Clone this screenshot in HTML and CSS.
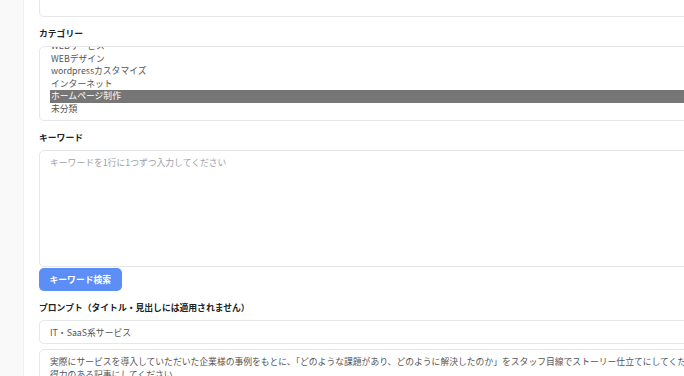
FILE: index.html
```html
<!DOCTYPE html>
<html lang="ja">
<head>
    <meta charset="UTF-8">
    <title>記事生成</title>
    <link rel="stylesheet" href="styles.css">
</head>
<body>
    <div class="layout">
        <aside class="sidebar"></aside>
        <main class="main">
            <form class="form">
                <input type="text" class="field top-field">

                <label class="label">カテゴリー</label>
                <div class="listbox">
                    <ul class="options">
                        <li>WEBサービス</li>
                        <li>WEBデザイン</li>
                        <li>wordpressカスタマイズ</li>
                        <li>インターネット</li>
                        <li class="selected">ホームページ制作</li>
                        <li>未分類</li>
                    </ul>
                </div>

                <label class="label">キーワード</label>
                <textarea class="field keywords" placeholder="キーワードを1行に1つずつ入力してください"></textarea>
                <button type="button" class="btn">キーワード検索</button>

                <label class="label">プロンプト（タイトル・見出しには適用されません）</label>
                <input type="text" class="field" value="IT・SaaS系サービス">
                <textarea class="field prompt">実際にサービスを導入していただいた企業様の事例をもとに、「どのような課題があり、どのように解決したのか」をスタッフ目線でストーリー仕立てにしてください。説得力のある記事にしてください。</textarea>
            </form>
        </main>
    </div>
</body>
</html>
```

FILE: styles.css
```css
body {
    margin: 0;
    padding: 0;
    background: #fff;
    font-family: "Noto Sans CJK JP", "Noto Sans", sans-serif;
    font-size: 8.8px;
    color: #1f2328;
    overflow: hidden;
}
.layout {
    display: flex;
    height: 376px;
}
.sidebar {
    width: 23px;
    flex-shrink: 0;
    background: #f9f9fa;
    border-right: 1px solid #efeff1;
}
.main {
    flex: 1;
    padding-left: 15px;
    overflow: hidden;
}
.form {
    width: 700px;
    display: flex;
    flex-direction: column;
    align-items: flex-start;
    margin-top: -20px;
}
.field {
    box-sizing: border-box;
    width: 100%;
    border: 1px solid #e6e7ea;
    border-radius: 5px;
    font-family: inherit;
    font-size: 8.8px;
    color: #555;
    padding: 0 10px;
    background: #fff;
    outline: none;
}
input.field {
    height: 24px;
}
.top-field {
    height: 37px !important;
}
.label {
    display: block;
    font-weight: bold;
    line-height: 12px;
    height: 12px;
    margin: 11px 0 6px;
    color: #222;
}
.listbox {
    box-sizing: border-box;
    width: 100%;
    height: 75px;
    border: 1px solid #e6e7ea;
    border-radius: 5px;
    padding: 0 10px;
    overflow: hidden;
}
.options {
    list-style: none;
    margin: -7px 0 0;
    padding: 0;
    color: #555;
}
.options li {
    line-height: 12.5px;
    height: 12.5px;
    padding-left: 1px;
}
.options .selected {
    background: #767676;
    color: #fff;
}
textarea.field {
    display: block;
    resize: none;
    padding: 6px 10px 5px;
    line-height: 12.5px;
}
.keywords {
    height: 117px;
}
.keywords::placeholder {
    color: #9ca0a8;
}
.prompt {
    height: 60px;
    margin-top: 5px;
}
.btn {
    margin-top: 1px;
    height: 23px;
    padding: 0 10.5px;
    border: none;
    border-radius: 5px;
    background: #5d8ef6;
    color: #fff;
    font-family: inherit;
    font-size: 8.8px;
    font-weight: bold;
    cursor: pointer;
}
```
